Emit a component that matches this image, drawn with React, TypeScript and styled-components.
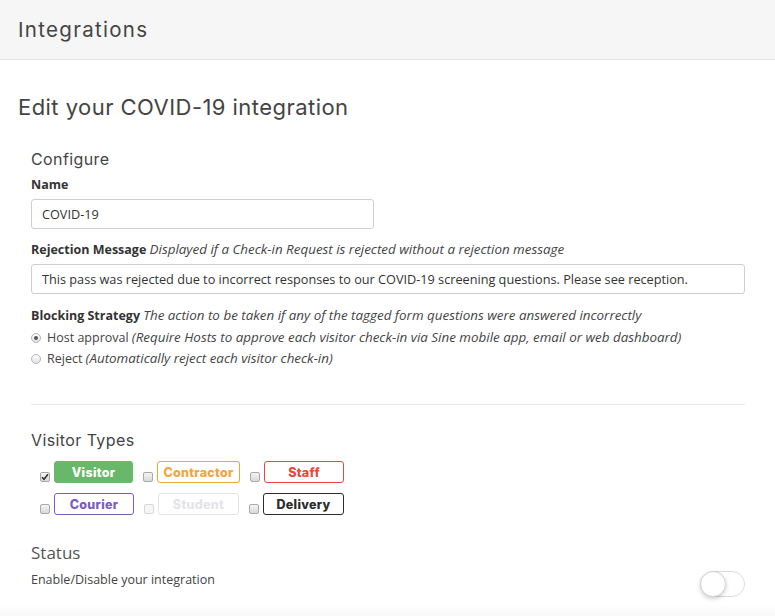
import styled, { createGlobalStyle } from "styled-components";

const GlobalStyle = createGlobalStyle`
  html, body {
    margin: 0;
    padding: 0;
    background: #ffffff;
  }
  body {
    font-family: "Open Sans", "Liberation Sans", sans-serif;
    color: #444;
  }
`;

type VisitorType = {
  name: string;
  color: string;
  width: number;
  filled?: boolean;
  checked?: boolean;
};

const typeRows: VisitorType[][] = [
  [
    { name: "Visitor", color: "#69b869", width: 79, filled: true, checked: true },
    { name: "Contractor", color: "#f4a43c", width: 83 },
    { name: "Staff", color: "#e8473a", width: 80 },
  ],
  [
    { name: "Courier", color: "#7c5bc4", width: 80 },
    { name: "Student", color: "#e4e4e8", width: 81 },
    { name: "Delivery", color: "#2b2b2b", width: 81 },
  ],
];

const App = () => {
  return (
    <>
      <GlobalStyle />
      <PageStyled>
        <HeaderStyled>Integrations</HeaderStyled>
        <MainStyled>
          <TitleStyled>Edit your COVID-19 integration</TitleStyled>
          <SectionStyled>
            <SubTitleStyled>Configure</SubTitleStyled>
            <LabelStyled $mt={7}>Name</LabelStyled>
            <InputStyled $width={343} defaultValue="COVID-19" />
            <LabelStyled $mt={12}>
              Rejection Message <HintStyled>Displayed if a Check-in Request is rejected without a rejection message</HintStyled>
            </LabelStyled>
            <InputStyled defaultValue="This pass was rejected due to incorrect responses to our COVID-19 screening questions. Please see reception." />
            <LabelStyled $mt={13}>
              Blocking Strategy <HintStyled>The action to be taken if any of the tagged form questions were answered incorrectly</HintStyled>
            </LabelStyled>
            <RadioListStyled>
              <RadioRowStyled>
                <RadioStyled $checked />
                Host approval <HintStyled>(Require Hosts to approve each visitor check-in via Sine mobile app, email or web dashboard)</HintStyled>
              </RadioRowStyled>
              <RadioRowStyled>
                <RadioStyled />
                Reject <HintStyled>(Automatically reject each visitor check-in)</HintStyled>
              </RadioRowStyled>
            </RadioListStyled>
            <DividerStyled />
            <SubTitleStyled $mt={25}>Visitor Types</SubTitleStyled>
            <TypesStyled>
              {typeRows.map((row, i) => (
                <TypeRowStyled key={i}>
                  {row.map((t) => (
                    <TypeItemStyled key={t.name}>
                      <CheckboxStyled $faded={t.name === "Student"}>
                        {t.checked && (
                          <svg width="8" height="8" viewBox="0 0 8 8">
                            <path d="M1 4.2 L3 6.2 L7 1.2" fill="none" stroke="#333" strokeWidth="1.6" />
                          </svg>
                        )}
                      </CheckboxStyled>
                      <BadgeStyled $color={t.color} $filled={t.filled} $width={t.width}>
                        {t.name}
                      </BadgeStyled>
                    </TypeItemStyled>
                  ))}
                </TypeRowStyled>
              ))}
            </TypesStyled>
            <StatusTitleStyled>Status</StatusTitleStyled>
            <StatusRowStyled>
              <StatusTextStyled>Enable/Disable your integration</StatusTextStyled>
              <ToggleStyled>
                <KnobStyled />
              </ToggleStyled>
            </StatusRowStyled>
          </SectionStyled>
        </MainStyled>
        <FooterStyled />
      </PageStyled>
    </>
  );
};

export default App;

const PageStyled = styled.div`
  width: 775px;
  min-height: 616px;
  display: flex;
  flex-direction: column;
`;

const HeaderStyled = styled.div`
  height: 59px;
  display: flex;
  align-items: center;
  padding-left: 18px;
  background: #f6f6f6;
  border-bottom: 1px solid #e3e3e3;
  font-family: Inter, "Liberation Sans", sans-serif;
  font-size: 20.5px;
  letter-spacing: 1.3px;
  color: #444;
`;

const MainStyled = styled.div`
  flex: 1;
  padding: 0 30px 0 18px;
`;

const TitleStyled = styled.h1`
  margin: 32px 0 0;
  font-family: Inter, "Liberation Sans", sans-serif;
  font-weight: 400;
  font-size: 22px;
  line-height: 30px;
  letter-spacing: 0.45px;
  color: #444;
`;

const SectionStyled = styled.div`
  padding-left: 13px;
`;

const SubTitleStyled = styled.h2<{ $mt?: number }>`
  margin: ${({ $mt }) => $mt ?? 27}px 0 0;
  font-family: Inter, "Liberation Sans", sans-serif;
  font-weight: 400;
  font-size: 16px;
  line-height: 20px;
  letter-spacing: 0.4px;
  color: #444;
`;

const LabelStyled = styled.div<{ $mt: number }>`
  margin-top: ${({ $mt }) => $mt}px;
  height: 18px;
  font-size: 12.5px;
  line-height: 18px;
  font-weight: 700;
  color: #333;
  white-space: nowrap;
`;

const HintStyled = styled.span`
  font-weight: 400;
  font-style: italic;
  font-size: 13.4px;
  line-height: 1;
  color: #444;
`;

const InputStyled = styled.input<{ $width?: number }>`
  display: block;
  box-sizing: border-box;
  margin-top: 5px;
  width: ${({ $width }) => ($width ? `${$width}px` : "100%")};
  height: 30px;
  padding: 0 10px;
  border: 1px solid #cfcfcf;
  border-radius: 3px;
  font-family: "Open Sans", "Liberation Sans", sans-serif;
  font-size: 12.7px;
  color: #333;
  outline: none;
`;

const RadioListStyled = styled.div`
  margin-top: 2px;
`;

const RadioRowStyled = styled.div`
  height: 21px;
  line-height: 21px;
  font-size: 12.5px;
  color: #444;
  white-space: pre;
`;

const RadioStyled = styled.span<{ $checked?: boolean }>`
  box-sizing: border-box;
  display: inline-flex;
  vertical-align: middle;
  position: relative;
  top: -1px;
  width: 10px;
  height: 10px;
  margin-right: 6px;
  border-radius: 50%;
  border: 1px solid #b3b3b3;
  background: linear-gradient(#ffffff, #e2e2e2);
  align-items: center;
  justify-content: center;
  &::after {
    content: "";
    width: 4px;
    height: 4px;
    border-radius: 50%;
    background: ${({ $checked }) => ($checked ? "#555" : "transparent")};
  }
`;

const DividerStyled = styled.div`
  margin-top: 35px;
  height: 1px;
  background: #e8e8e8;
`;

const TypesStyled = styled.div`
  margin: 11px 0 0 9px;
  display: flex;
  flex-direction: column;
  gap: 10px;
`;

const TypeRowStyled = styled.div`
  display: flex;
  gap: 10px;
`;

const TypeItemStyled = styled.div`
  display: flex;
  align-items: flex-end;
  gap: 4px;
`;

const CheckboxStyled = styled.span<{ $faded?: boolean }>`
  box-sizing: border-box;
  width: 10px;
  height: 10px;
  margin-bottom: 1px;
  border: 1px solid ${({ $faded }) => ($faded ? "#d8d8d8" : "#a9a9a9")};
  border-radius: 2px;
  background: ${({ $faded }) => ($faded ? "#f6f6f6" : "linear-gradient(#f4f4f4, #d9d9d9)")};
  display: flex;
  align-items: center;
  justify-content: center;
`;

const BadgeStyled = styled.div<{ $color: string; $filled?: boolean; $width: number }>`
  box-sizing: border-box;
  width: ${({ $width }) => $width}px;
  height: 22px;
  display: flex;
  align-items: center;
  justify-content: center;
  border: 1px solid ${({ $color }) => $color};
  border-radius: 3px;
  background: ${({ $filled, $color }) => ($filled ? $color : "#fff")};
  color: ${({ $filled, $color }) => ($filled ? "#fff" : $color)};
  font-family: Inter, "Liberation Sans", sans-serif;
  font-weight: 800;
  font-size: 12.5px;
  letter-spacing: 0.3px;
`;

const StatusTitleStyled = styled.div`
  margin-top: 28px;
  font-size: 17px;
  line-height: 20px;
  color: #555;
`;

const StatusRowStyled = styled.div`
  margin-top: 8px;
  display: flex;
  justify-content: space-between;
  align-items: flex-start;
`;

const StatusTextStyled = styled.div`
  font-size: 12.5px;
  line-height: 18px;
  color: #444;
`;

const ToggleStyled = styled.div`
  box-sizing: border-box;
  width: 45px;
  height: 26px;
  border: 1px solid #dcdcdc;
  border-radius: 13px;
  background: #fff;
  display: flex;
  align-items: center;
`;

const KnobStyled = styled.div`
  box-sizing: border-box;
  width: 26px;
  height: 26px;
  margin-left: -1px;
  border-radius: 50%;
  border: 1px solid #d4d4d4;
  background: #fff;
  box-shadow: 0 2px 4px rgba(0, 0, 0, 0.18);
`;

const FooterStyled = styled.div`
  height: 13px;
  background: linear-gradient(#ffffff, #f8f8f8);
`;
